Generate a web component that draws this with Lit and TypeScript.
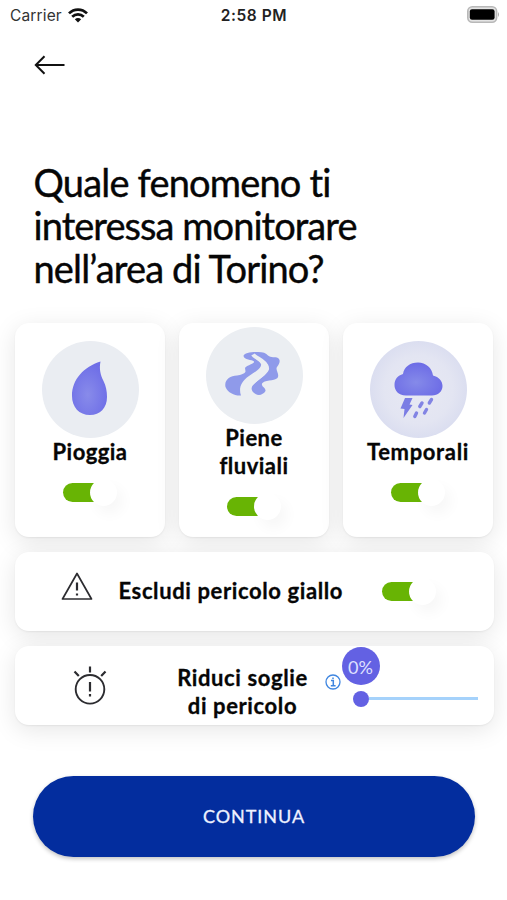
import { LitElement, html, css, svg } from "lit";
import { customElement, property } from "lit/decorators.js";

@customElement("toggle-switch")
class ToggleSwitch extends LitElement {
  static styles = css`
    :host { display: flex; align-items: center; width: 54px; height: 53px; }
    .track { display: flex; justify-content: flex-end; align-items: center; width: 54px; height: 19px; border-radius: 10px; background: linear-gradient(90deg, #68b404 60%, transparent 60%); }
    .knob { width: 27px; height: 27px; border-radius: 50%; background: #fff; box-shadow: 6px 8px 14px rgba(0, 0, 0, 0.035); }
  `;
  render() {
    return html`<div class="track"><div class="knob"></div></div>`;
  }
}

const drop = svg`
  <defs><radialGradient id="d" cx=".45" cy=".62" r=".6"><stop offset="0" stop-color="#888bea"/><stop offset="1" stop-color="#6e6ee7"/></radialGradient></defs>
  <circle cx="48.5" cy="48.5" r="48.5" fill="#eaedf2"/>
  <path d="M58.5 20.500 C57 28 58.500 34 61.500 40 C64 45 65 50 65 56 C65 67 58 74 48 74 C37 74 30 66 30 55 C30 38 42 26 58.500 20.500Z" fill="url(#d)"/>`;

const river = svg`
  <circle cx="48.5" cy="48.5" r="48.5" fill="#ebeef2"/>
  <path fill="#8f9aea" d="M35 68.500 C29 69 22 66 19.500 60 C18 53 24 48.500 31 48.500 C35 48 39 46.500 39.500 44.500 C39.500 42.500 38 41 40.500 39.500 C44 37.500 48.500 36.500 48 34.500 C46 32.500 38 33 37.500 29 C38 26 45 25 52 25 C57 25 60 26 62 28.500 C65 31 69 29.500 72 31 C75 33 73.500 37 71 40 C69 43 74 47 71.500 51 C68 54 58 53 56 56.500 C55 59.500 60 61 59.500 64 C57.500 67.500 53 69 49.500 67 C45 64 44.500 61 47.500 57.500 C52 52.500 61 48 63 42.500 C64 37 57 34.500 52 32.500 C50 31.500 48 29 46.500 28 C47.500 31 53.500 33.500 55 37 C56 41 49 45 43 49 C35 54.500 32.500 61 35 68.500Z"/>
  <path d="M47 27.500 C49 31 60.500 34 60.500 40 C60.500 46 52 50 45 57" fill="none" stroke="#ebeef2" stroke-width="4"/>`;

const storm = svg`
  <defs>
    <radialGradient id="b" cx=".5" cy=".5"><stop offset="0" stop-color="#e8e9f3"/><stop offset=".7" stop-color="#e3e5f2"/><stop offset="1" stop-color="#dbdef0"/></radialGradient>
    <radialGradient id="c" cx=".45" cy=".6" r=".6"><stop offset="0" stop-color="#858ae9"/><stop offset="1" stop-color="#6c6be6"/></radialGradient>
  </defs>
  <circle cx="48.5" cy="48.5" r="48.5" fill="url(#b)"/>
  <path d="M36 54.500 C28 54.500 24.500 49 24.500 44 C24.500 38 28 34.500 33 33 C34 26 40 21.500 48 21.500 C56 21.500 62 27 63 34.500 C69 36 72.500 40 72.500 45 C72.500 50.500 68 54.500 62 54.500Z" fill="url(#c)"/>
  <path d="M35 57 L42.500 57 L39.500 63.500 L42.500 64 L33.500 77 L34.500 68 L30.500 67.500Z" fill="#7b7de4"/>
  <path d="M52 62 L49.800 65.500 M61.500 58.500 L59.300 62 M56.500 68.500 L54.500 72 M46.500 72 L44.800 75.500" stroke="#8284e4" stroke-width="3.400" stroke-linecap="round"/>`;

@customElement("phenomenon-card")
class PhenomenonCard extends LitElement {
  @property({ attribute: false }) art: unknown;
  @property({ attribute: false }) lines: string[] = [];
  @property({ attribute: false }) tracking = 0;
  static styles = css`
    :host { display: flex; flex-direction: column; align-items: center; justify-content: center; }
    .art { display: block; width: 97px; height: 97px; flex: none; }
    .label { font-size: 22px; line-height: 28px; font-weight: 700; text-align: center; white-space: nowrap; -webkit-text-stroke: 0.3px #060606; }
  `;
  render() {
    return html`
      <svg class="art" viewBox="0 0 97 97">${this.art}</svg>
      ${this.lines.map((l) => html`<div class="label" style="letter-spacing:${this.tracking}px">${l}</div>`)}
      <toggle-switch></toggle-switch>`;
  }
}

@customElement("app-root")
class AppRoot extends LitElement {
  static styles = css`
    :host { display: flex; flex-direction: column; box-sizing: border-box; width: 507px; height: 900px; overflow: hidden; background: #fff; color: #060606; font-family: Lato, "Liberation Sans", sans-serif; }
    .status { display: grid; grid-template-columns: 1fr auto 1fr; align-items: center; height: 30px; padding: 0 7px 0 10px; font: 500 15.5px/30px Inter, sans-serif; }
    .carrier { display: flex; align-items: center; gap: 6px; font-weight: 400; color: #333; letter-spacing: 0.15px; }
    .time { font-weight: 600; font-size: 15.5px; letter-spacing: 0.55px; color: #222; margin-left: -2px; padding-top: 1px; }
    .carrier span { padding-top: 1px; }
    .battery { justify-self: end; margin-top: -2px; }
    svg { display: block; flex: none; }
    .back { margin: 25px 0 0 34px; }
    h1 { margin: 85.500px 0 0 33.500px; font-size: 38px; line-height: 43px; font-weight: 400; white-space: nowrap; -webkit-text-stroke: 0.4px #060606; }
    .l1 { letter-spacing: -0.82px; } .l2 { letter-spacing: -0.95px; } .l3 { letter-spacing: -0.84px; }
    .cards { display: grid; grid-template-columns: repeat(3, 150px); gap: 14px; margin: 33.500px 0 0 15px; height: 214px; }
    .card { background: #fff; border-radius: 14px; box-shadow: 0 1px 2px rgba(0, 0, 0, 0.06), 0 5px 24px rgba(0, 0, 0, 0.1); }
    .row { display: flex; align-items: center; height: 79px; width: 479px; margin: 15px 0 0 14.500px; box-sizing: border-box; font-size: 22px; line-height: 28px; font-weight: 700; white-space: nowrap; letter-spacing: 0.61px; }
    .warn { margin: -10px 0 0 46px; }
    .exclude { width: 225px; margin-left: 26px; padding-bottom: 1px; -webkit-text-stroke: 0.3px #060606; }
    .row toggle-switch { margin: -1px 0 0 38px; }
    .alarm { margin: -1px 0 0 57.500px; }
    .reduce { width: 132px; margin-left: 68.500px; text-align: center; padding-top: 12px; -webkit-text-stroke: 0.3px #060606; }
    .info { margin: -7px 0 0 16px; }
    .slider { display: grid; grid-template-columns: 38px 98px; align-items: center; margin: -18px 0 0 1px; row-gap: 6px; letter-spacing: 0; }
    .badge { grid-column: 1; width: 38px; height: 38px; border-radius: 50%; background: #6361e3; color: #dfe0ff; font: 400 18px/40px Lato, sans-serif; text-align: center; }
    .thumb { grid-column: 1; display: flex; align-items: center; width: 136px; height: 16px; padding-left: 11px; box-sizing: border-box; }
    .dot { width: 16px; height: 16px; border-radius: 50%; background: #6361e3; flex: none; }
    .bar { height: 3px; width: 109px; background: #a5d2fb; }
    button { margin: 51px 0 0 33px; width: 442px; height: 81px; padding: 0 0 1px; border: 0; border-radius: 41px; background: #032d9e; color: #eef1ff; font: 400 18px Lato, sans-serif; -webkit-text-stroke: 0.3px #eef1ff; letter-spacing: 0.95px; box-shadow: 0 2px 4px rgba(0, 0, 0, 0.24); }
  `;
  render() {
    return html`
      <div class="status">
        <div class="carrier"><span>Carrier</span>
          <svg width="20" height="15" viewBox="0 0 20 15" fill="none" stroke="#111" stroke-width="2.700"><path d="M1 5.400 C6 .3 14 .3 19 5.400 M4.200 8.700 C7.500 5.500 12.500 5.500 15.800 8.700"/><path d="M6.800 11.300 Q10 8.500 13.200 11.300 L10 14.600Z" fill="#111" stroke="none"/></svg>
        </div>
        <div class="time">2:58 PM</div>
        <svg class="battery" width="33" height="17" viewBox="0 0 33 17"><rect x=".8" y=".8" width="28.800" height="15.400" rx="4.500" fill="#e4e4e4" stroke="#b8b8b8" stroke-width="1.600"/><rect x="2.800" y="3.200" width="24.800" height="10.600" rx="2.200"/><path d="M31 6 Q33 8.500 31 11Z" fill="#aaa"/></svg>
      </div>
      <svg class="back" width="31" height="20" viewBox="0 0 31 20" fill="none" stroke="#111" stroke-width="2"><path d="M30.500 10 H2 M10.500 1.200 L1.800 10 L10.500 18.800"/></svg>
      <h1><span class="l1">Quale fenomeno ti</span><br /><span class="l2">interessa monitorare</span><br /><span class="l3">nell’area di Torino?</span></h1>
      <div class="cards">
        <phenomenon-card class="card" .art=${drop} .lines=${["Pioggia"]} .tracking=${0.45}></phenomenon-card>
        <phenomenon-card class="card" .art=${river} .lines=${["Piene", "fluviali"]} .tracking=${0.5}></phenomenon-card>
        <phenomenon-card class="card" .art=${storm} .lines=${["Temporali"]} .tracking=${0.65}></phenomenon-card>
      </div>
      <div class="card row">
        <svg class="warn" width="32" height="29" viewBox="0 0 32 29" fill="none" stroke="#2c2c30" stroke-width="1.700" stroke-linejoin="round"><path d="M16 1.500 L30.500 27 H1.500Z"/><path d="M16 10.500 V18.500 M16 21.500 V23.500" stroke-width="2.200"/></svg>
        <span class="exclude">Escludi pericolo giallo</span>
        <toggle-switch></toggle-switch>
      </div>
      <div class="card row">
        <svg class="alarm" width="36" height="40" viewBox="0 0 36 40" fill="none" stroke="#2c2c30" stroke-width="1.900"><circle cx="18" cy="24.300" r="14.300"/><path d="M18 1.500 V7.500 M2.500 6.500 L6.800 11 M33.500 6.500 L29.200 11 M18 17 V26.500 M18 29 V31.500" stroke-width="2.200"/></svg>
        <div class="reduce">Riduci soglie<br />di pericolo</div>
        <svg class="info" width="16" height="16" viewBox="0 0 16 16" fill="none" stroke="#3f86e0"><circle cx="8" cy="8" r="7" stroke-width="1.300"/><path d="M6 6.500 H8.300 V11.500 M5.800 11.700 H10.600 M8 3.400 V5" stroke-width="1.500"/></svg>
        <div class="slider">
          <div class="badge">0%</div>
          <div class="thumb"><div class="dot"></div><div class="bar"></div></div>
        </div>
      </div>
      <button>CONTINUA</button>`;
  }
}
